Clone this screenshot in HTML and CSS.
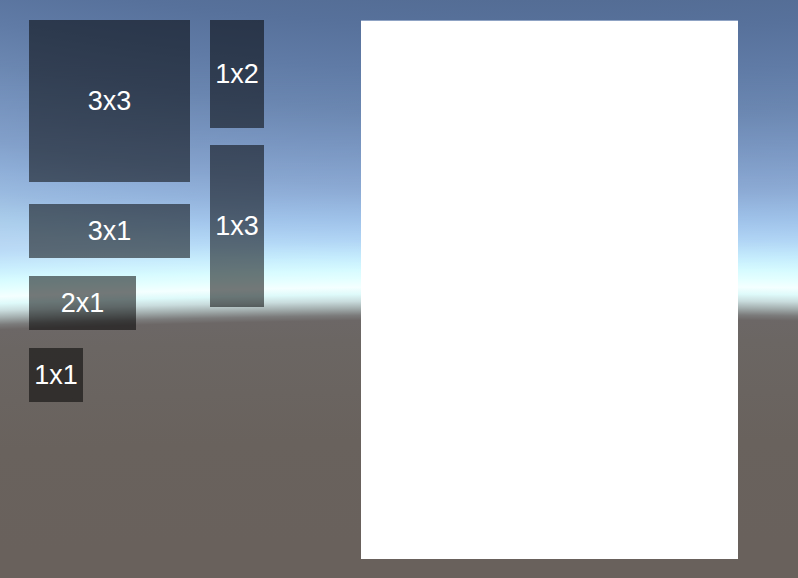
FILE: index.html
```html
<!DOCTYPE html>
<html lang="en">
<head>
<meta charset="utf-8">
<meta name="viewport" content="width=device-width, initial-scale=1">
<title>Grid items</title>
<link rel="stylesheet" href="styles.css">
</head>
<body>
<main class="scene">
  <section class="palette" aria-label="Items">
    <div class="column">
      <button type="button" class="tile w3 h3 lead">3x3</button>
      <button type="button" class="tile w3 h1">3x1</button>
      <button type="button" class="tile w2 h1">2x1</button>
      <button type="button" class="tile w1 h1">1x1</button>
    </div>
    <div class="column side">
      <button type="button" class="tile w1 h2">1x2</button>
      <button type="button" class="tile w1 h3">1x3</button>
    </div>
  </section>
  <section class="board" aria-label="Grid"></section>
</main>
</body>
</html>
```

FILE: styles.css
```css
:root {
  --unit: 54px;
}

* {
  box-sizing: border-box;
}

body {
  margin: 0;
  font-family: "Liberation Sans", Arial, sans-serif;
}

/* Sky and ground: the horizon is the edge of a very large circle. */
.scene {
  position: relative;
  isolation: isolate;
  display: flex;
  gap: 97px;
  min-height: 100vh;
  padding: 20px 60px 19px 29px;
  background: radial-gradient(circle 15000px at 70% 15000px,
    #69615c 14460px,
    #69625d 14560px,
    #6b6663 14660px,
    #6c6766 14681px,
    #7b7b7b 14686px,
    #a3aeae 14693px,
    #c9dcdd 14700px,
    #defafa 14707px,
    #f4ffff 14714px,
    #e6ffff 14721px,
    #d6fbff 14731px,
    #c4ebfd 14744px,
    #b0d4f5 14760px,
    #9dc0e8 14782px,
    #8caad4 14808px,
    #7b98c3 14845px,
    #6b87b1 14885px,
    #607ba6 14925px,
    #57719b 14970px,
    #546d95 15000px);
}

/* Upper sky, whose bands bend the other way. */
.scene::before {
  content: "";
  position: absolute;
  inset: 0;
  z-index: -1;
  background: radial-gradient(circle 4000px at 70% -3000px,
    #546d95 3000px,
    #57719b 3030px,
    #607ba6 3075px,
    #6b87b1 3115px,
    #7b98c3 3155px,
    #8caad4 3192px,
    #9dc0e8 3218px,
    #b0d4f5 3240px,
    #c4ebfd 3256px,
    #d6fbff 3269px,
    #e6ffff 3279px,
    #f4ffff 3290px);
  mask-image: linear-gradient(#000 60px, rgba(0, 0, 0, 0.4) 200px, transparent 285px);
}

.palette {
  display: flex;
  gap: 20px;
}

.column {
  display: flex;
  flex-direction: column;
  align-items: flex-start;
  gap: 18px;
}

.side {
  gap: 17px;
}

.tile {
  padding: 0;
  border: 0;
  background: rgba(0, 0, 0, 0.53);
  color: #fff;
  font: 27px/32px "Liberation Sans", Arial, sans-serif;
  text-align: center;
}

.lead {
  margin-bottom: 4px;
}

.w1 { width: var(--unit); }
.w2 { width: 107px; }
.w3 { width: 161px; }
.h1 { height: var(--unit); }
.h2 { height: calc(var(--unit) * 2); }
.h3 { height: calc(var(--unit) * 3); }

.board {
  flex: 1;
  border-top: 1px solid #8fa3c4;
  background: #fff;
}
```
